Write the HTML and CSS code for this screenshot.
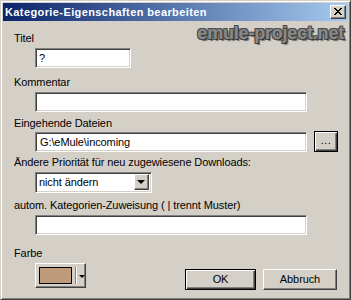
FILE: index.html
```html
<!DOCTYPE html>
<html lang="de">
<head>
<meta charset="utf-8">
<title>Kategorie-Eigenschaften bearbeiten</title>
<link rel="stylesheet" href="styles.css">
</head>
<body>
<div class="window">
  <div class="titlebar">
    <span class="title">Kategorie-Eigenschaften bearbeiten</span>
    <span class="close">
      <svg width="8" height="7" viewBox="0 0 8 7"><path d="M0 0h2v1h1v1h2V1h1V0h2v1H7v1H6v1H5v1h1v1h1v1h1v1H6V6H5V5H3v1H2v1H0V6h1V5h1V4h1V3H2V2H1V1H0z" fill="#000"/></svg>
    </span>
  </div>
  <div class="client">
    <div class="watermark">emule-project.net</div>

    <div class="lbl lbl-titel">Titel</div>
    <div class="field field-short">?</div>

    <div class="lbl lbl-komm">Kommentar</div>
    <div class="field field-komm"></div>

    <div class="lbl lbl-dateien">Eingehende Dateien</div>
    <div class="row-path">
      <div class="field field-path">G:\eMule\incoming</div>
      <div class="btn-dots">...</div>
    </div>

    <div class="lbl lbl-prio">Ändere Priorität für neu zugewiesene Downloads:</div>
    <div class="combo">
      <span class="combo-text">nicht ändern</span>
      <span class="combo-btn"><span class="tri"></span></span>
    </div>

    <div class="lbl lbl-auto">autom. Kategorien-Zuweisung ( | trennt Muster)</div>
    <div class="field field-auto"></div>

    <div class="lbl lbl-farbe">Farbe</div>
    <div class="bottom">
      <div class="color-btn">
        <span class="swatch"></span>
        <span class="sep"></span>
        <span class="tri-small"></span>
      </div>
      <div class="buttons">
        <div class="btn btn-default">OK</div>
        <div class="btn btn-cancel">Abbruch</div>
      </div>
    </div>
  </div>
</div>
</body>
</html>
```
FILE: styles.css
```css
* { box-sizing: border-box; }
html, body { margin: 0; padding: 0; }
body {
  width: 351px;
  height: 300px;
  overflow: hidden;
  background: #d4d0c8;
  font: 11px "Liberation Sans", Arial, sans-serif;
  letter-spacing: -0.1px;
  color: #000;
}
.window {
  width: 351px;
  height: 300px;
  background: #d4d0c8;
  border: 1px solid;
  border-color: #d4d0c8 #404040 #404040 #d4d0c8;
  box-shadow: inset 1px 1px #fff, inset -1px -1px #808080;
  padding: 2px;
  display: flex;
  flex-direction: column;
}
.titlebar {
  height: 18px;
  flex: none;
  background: linear-gradient(to right, #0a246a, #a6caf0);
  display: flex;
  align-items: center;
  justify-content: space-between;
  padding: 0 2px;
}
.title {
  color: #fff;
  font-weight: bold;
  letter-spacing: 0.4px;
  line-height: 13px;
}
.close {
  width: 16px;
  height: 14px;
  background: #d4d0c8;
  border: 1px solid;
  border-color: #fff #404040 #404040 #fff;
  box-shadow: inset -1px -1px #808080;
  display: flex;
  align-items: center;
  justify-content: center;
  padding-bottom: 1px;
}
.close svg { display: block; }
.client {
  flex: 1;
  position: relative;
  padding: 0 11px;
  display: flex;
  flex-direction: column;
  align-items: flex-start;
}
.watermark {
  position: absolute;
  top: 2px;
  right: 4px;
  font: bold 18px "Liberation Sans", Arial, sans-serif;
  letter-spacing: -0.2px;
  color: #8a8a8a;
  line-height: 21px;
  text-shadow: -1px -1px 0 #4a4a4a, 1px -1px 0 #4a4a4a, -1px 1px 0 #4a4a4a, 1px 1px 0 #2e2e2e, 2px 2px 1px #6a6a6a;
}
.lbl {
  line-height: 13px;
  height: 13px;
  white-space: nowrap;
}
.lbl-titel { margin-top: 11px; }
.lbl-komm { margin-top: 8px; }
.lbl-dateien { margin-top: 5px; }
.lbl-prio { margin-top: 4px; }
.lbl-auto { margin-top: 6px; }
.lbl-farbe { margin-top: 12px; }

.field {
  margin-left: 21px;
  margin-top: 3px;
  height: 20px;
  width: 272px;
  background: #fff;
  border: 1px solid;
  border-color: #808080 #fff #fff #808080;
  box-shadow: inset 1px 1px #404040, inset -1px -1px #d4d0c8;
  padding: 0 3px;
  line-height: 18px;
  white-space: nowrap;
}
.field-short { width: 96px; }
.row-path {
  margin-left: 21px;
  margin-top: 1px;
  display: flex;
  gap: 7px;
  align-items: flex-start;
}
.row-path .field { margin: 1px 0 0 0; padding-left: 4px; }
.btn-dots {
  width: 24px;
  height: 21px;
  border: 1px solid #000;
  box-shadow: inset 1px 1px #fff, inset -1px -1px #404040, inset -2px -2px #808080;
  text-align: center;
  line-height: 17px;
  letter-spacing: 0.5px;
}
.combo {
  margin-left: 21px;
  margin-top: 3px;
  width: 117px;
  height: 21px;
  background: #fff;
  border: 1px solid;
  border-color: #808080 #fff #fff #808080;
  box-shadow: inset 1px 1px #404040, inset -1px -1px #d4d0c8;
  padding: 1px 2px 2px 2px;
  display: flex;
  align-items: stretch;
}
.combo-text {
  flex: 1;
  line-height: 17px;
  padding-left: 1px;
}
.combo-btn {
  width: 15px;
  background: #d4d0c8;
  border: 1px solid;
  border-color: #fff #404040 #404040 #fff;
  box-shadow: inset -1px -1px #808080;
  display: flex;
  align-items: center;
  justify-content: center;
}
.tri {
  width: 0;
  height: 0;
  border-left: 4px solid transparent;
  border-right: 4px solid transparent;
  border-top: 4px solid #000;
  margin-right: 1px;
}
.bottom {
  align-self: stretch;
  margin-left: 21px;
  margin-top: 3px;
  display: flex;
  align-items: flex-start;
}
.color-btn {
  width: 51px;
  height: 25px;
  background: #d4d0c8;
  border: 1px solid;
  border-color: #fff #404040 #404040 #fff;
  box-shadow: inset -1px -1px #808080;
  display: flex;
  align-items: center;
  padding-left: 3px;
}
.swatch {
  width: 33px;
  height: 17px;
  background: #be9b7b;
  border: 1px solid #000;
}
.sep {
  width: 2px;
  height: 17px;
  margin-left: 3px;
  border-left: 1px solid #808080;
  border-right: 1px solid #fff;
}
.tri-small {
  width: 0;
  height: 0;
  border-left: 3px solid transparent;
  border-right: 3px solid transparent;
  border-top: 3px solid #000;
  margin-left: 2px;
  margin-top: 1px;
}
.buttons {
  margin-left: auto;
  margin-top: 6px;
  display: flex;
  gap: 7px;
}
.btn {
  height: 21px;
  width: 74px;
  background: #d4d0c8;
  border: 1px solid;
  border-color: #fff #404040 #404040 #fff;
  box-shadow: inset -1px -1px #808080;
  text-align: center;
  line-height: 18px;
}
.btn-default {
  width: 71px;
  border-color: #000;
  box-shadow: inset 1px 1px #fff, inset -1px -1px #404040, inset -2px -2px #808080;
}
```
